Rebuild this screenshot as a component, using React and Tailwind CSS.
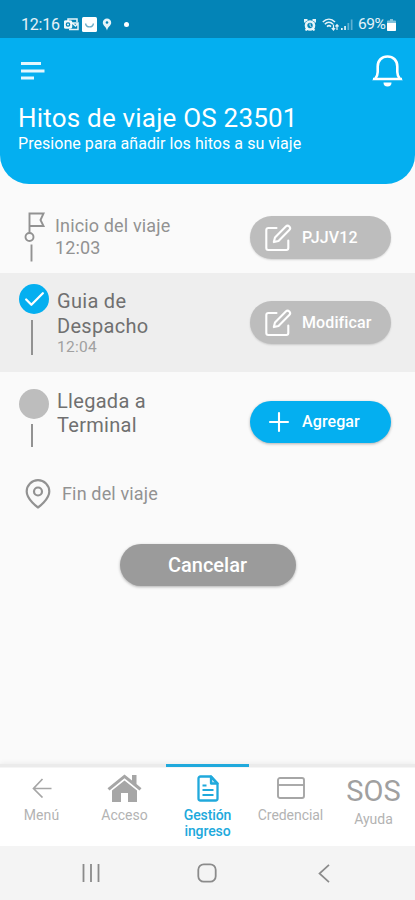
import { Check } from "lucide-react";

function EditIcon() {
  return (
    <svg className="w-[28px] h-[28px] shrink-0" viewBox="0 0 28 28" fill="none" stroke="white" strokeWidth="2.1" strokeLinecap="round" strokeLinejoin="round">
      <path d="M12.500 4H4.300a2 2 0 0 0-2 2v18a2 2 0 0 0 2 2h18a2 2 0 0 0 2-2v-7.500" />
      <path d="M21.800 2.600a2.450 2.450 0 0 1 3.500 3.500L14.500 16.900l-4.700 1.200 1.200-4.700z" />
    </svg>
  );
}

function PlusIcon() {
  return (
    <svg className="w-[28px] h-[28px] shrink-0" viewBox="0 0 28 28" stroke="white" strokeWidth="2.1" strokeLinecap="round">
      <path d="M15 5v18M6 14h18" />
    </svg>
  );
}

function Pill({ label, active, className }) {
  return (
    <button
      className={`flex items-center w-[141px] ml-auto mr-[24px] pl-[14px] rounded-full text-white text-[16px] font-medium ${
        active ? "h-[42px] bg-[#04aff0] shadow-[0_1px_3px_rgba(0,0,0,0.3)]" : "h-[43px] bg-[#bdbdbd] shadow-[0_1px_2px_rgba(0,0,0,0.15)]"
      } ${className}`}
    >
      {active ? <PlusIcon /> : <EditIcon />}
      <span className="ml-[10px] tracking-[0.1px] whitespace-nowrap">{label}</span>
    </button>
  );
}

function StatusBar() {
  return (
    <div className="flex items-center h-[38px] pt-[11px] pl-[21px] pr-[19px] bg-[#0384b7] text-white/90">
      <span className="w-[38px] text-[16px] tracking-[-0.2px]">12:16</span>
      <svg className="w-[15px] h-[13px] ml-[5px]" viewBox="0 0 15 13" fill="none" stroke="currentColor" strokeWidth="1.5">
        <path d="M4 3V1h9v3M8 5h6v6.500H5M8 5l3.500 3L14 5" />
        <rect x="0.500" y="3" width="7" height="7" rx="1" fill="currentColor" />
        <circle cx="4" cy="6.500" r="1.700" stroke="#0384b7" strokeWidth="1.2" />
      </svg>
      <svg className="w-[15px] h-[15px] ml-[3px]" viewBox="0 0 15 15">
        <rect width="15" height="15" rx="1.500" fill="white" />
        <path d="M3.500 6.500c1 4.500 7 4.500 8 0" fill="none" stroke="#6aacc8" strokeWidth="1.300" />
      </svg>
      <svg className="w-[10px] h-[13px] ml-[5px]" viewBox="0 0 10 13" fill="currentColor">
        <path d="M5 0.500a4.200 4.200 0 0 1 4.200 4.200C9.200 7.500 5.800 8.500 5 12.500 4.200 8.500 0.800 7.500 0.800 4.700A4.200 4.200 0 0 1 5 0.500z" />
        <circle cx="5" cy="4.500" r="1.300" fill="#0384b7" />
      </svg>
      <span className="w-[5px] h-[5px] ml-[12px] rounded-full bg-white" />
      <svg className="w-[12px] h-[12px] ml-auto" viewBox="0 0 12 12" fill="none" stroke="currentColor">
        <circle cx="6" cy="6.500" r="4" strokeWidth="2.600" />
        <path d="M6 4.500v2.300l1.500 1" strokeWidth="1" />
        <path d="M0.800 3.500V1H3.500M11.200 3.500V1H8.500M1.500 11.500l2-2M10.500 11.500l-2-2" strokeWidth="1.900" />
      </svg>
      <svg className="w-[17px] h-[13px] ml-[6px]" viewBox="0 0 17 13" fill="none" stroke="currentColor" strokeWidth="1.500">
        <path d="M0.800 4c3.700-3.700 8.500-3.700 12.200 0M2.800 6.300c2.500-2.600 5.700-2.600 8.200 0M5 8.600c1.300-1.300 2.700-1.300 4 0" />
        <path d="M11.500 6.500V12M9.800 10l1.700 2 1.600-2M15 12V6.500M13.500 8.500L15 6.700l1.500 1.800" strokeWidth="1.200" />
      </svg>
      <svg className="w-[12px] h-[11px] ml-[2px]" viewBox="0 0 12 11" fill="currentColor">
        <path d="M0 9h1.700v2H0zM3.200 7h1.700v4H3.200z" />
        <path d="M6.500 4h1.700v7H6.500zM9.800 0.500h1.700V11H9.800z" opacity="0.400" />
      </svg>
      <span className="w-[28px] ml-[5px] text-[15.5px] tracking-[-0.500px]">69%</span>
      <svg className="w-[9px] h-[12px] ml-[1px]" viewBox="0 0 9 12" fill="white">
        <path d="M3 0h3v1.500h2a1 1 0 0 1 1 1V11a1 1 0 0 1-1 1H1a1 1 0 0 1-1-1V2.500a1 1 0 0 1 1-1h2z" opacity="0.500" />
        <path d="M0 4h9v7a1 1 0 0 1-1 1H1a1 1 0 0 1-1-1z" />
      </svg>
    </div>
  );
}

function Header() {
  return (
    <div className="h-[146px] rounded-b-[29px] bg-[#04aff0] text-white">
      <div className="flex justify-between pl-[21px] pr-[12px] pt-[16px]">
        <svg className="w-[24px] h-[20px] mt-[7px]" viewBox="0 0 24 20" stroke="#e4f7fd" strokeWidth="3">
          <path d="M0 2.500h20M0 10h23.500M0 17h13" />
        </svg>
        <svg className="w-[31px] h-[34px]" viewBox="0 0 31 34" fill="none" stroke="white" strokeWidth="2.600">
          <path d="M3 25h25c-1.800-2-2.700-4-2.700-7v-5.500c0-6-4-10-9.800-10s-9.800 4-9.800 10V18c0 3-0.900 5-2.700 7zM1 25h29" />
          <path d="M11.500 28.500h8a4 4 0 0 1-8 0z" fill="white" stroke="none" />
        </svg>
      </div>
      <h1 className="mt-[14px] pl-[18px] text-[26px] leading-[32px] tracking-[0.200px] whitespace-nowrap">Hitos de viaje OS 23501</h1>
      <p className="pl-[18px] mt-[1px] text-[16px] leading-[18px] tracking-[0.050px] whitespace-nowrap">Presione para añadir los hitos a su viaje</p>
    </div>
  );
}

function Milestones() {
  return (
    <div className="text-[#707070]">
      <div className="flex h-[89px] text-[#929292]">
        <svg className="w-[22px] h-[50px] ml-[24px] mt-[28px]" viewBox="0 0 22 50" fill="none" stroke="#929292" strokeWidth="1.900">
          <path d="M5.500 21V1.500h14L16.500 8l3 6h-14" />
          <circle cx="5.500" cy="25" r="4" />
          <path d="M7.500 32.500v17" />
        </svg>
        <div className="ml-[9px] mt-[31px] text-[18px] leading-[22px] tracking-[0.150px] whitespace-nowrap">
          <div>Inicio del viaje</div>
          <div>12:03</div>
        </div>
        <Pill label="PJJV12" className="mt-[32px]" />
      </div>

      <div className="flex h-[99px] bg-[#eeeeee]">
        <div className="w-[30px] ml-[19px] pt-[11px]">
          <div className="flex items-center justify-center w-[30px] h-[30px] rounded-full bg-[#04aff0]">
            <Check className="w-[25px] h-[25px] text-white" strokeWidth={2.200} />
          </div>
          <div className="w-[2px] h-[35px] mt-[6px] ml-[12px] bg-[#929292]" />
        </div>
        <div className="ml-[8px] mt-[16px] text-[20px] leading-[25px] tracking-[0.300px]">
          <div>Guia de</div>
          <div>Despacho</div>
          <div className="text-[15.500px] leading-[17px] text-[#a0a0a0]">12:04</div>
        </div>
        <Pill label="Modificar" className="mt-[28px]" />
      </div>

      <div className="flex h-[99px]">
        <div className="w-[30px] ml-[19px] pt-[17px]">
          <div className="w-[30px] h-[30px] rounded-full bg-[#bdbdbd]" />
          <div className="w-[2px] h-[23px] mt-[5px] ml-[12px] bg-[#929292]" />
        </div>
        <div className="ml-[8px] mt-[17px] text-[20px] leading-[24px] tracking-[0.300px]">
          <div>Llegada a</div>
          <div>Terminal</div>
        </div>
        <Pill label="Agregar" active className="mt-[29px]" />
      </div>

      <div className="flex items-center h-[46px] text-[#929292]">
        <svg className="w-[26px] h-[30px] ml-[25px]" viewBox="0 0 26 30" fill="none" stroke="#929292" strokeWidth="2.2">
          <path d="M13 28.500S1.700 20.500 1.700 12.500a11.300 11.300 0 0 1 22.600 0C24.300 20.500 13 28.500 13 28.500z" strokeLinejoin="round" />
          <circle cx="13" cy="12.500" r="4" />
        </svg>
        <span className="ml-[11px] -mt-[2px] text-[18px] tracking-[0.150px]">Fin del viaje</span>
      </div>
    </div>
  );
}

function BottomNav() {
  return (
    <nav className="grid grid-cols-5 h-[82px] text-center text-[14px] leading-[16px] text-[#b3b3b3] bg-[linear-gradient(#ebebeb_0px,#ebebeb_3px,white_4px)] shadow-[0_-1px_5px_rgba(0,0,0,0.06)]">
      <div className="flex flex-col items-center pt-[14px]">
        <svg className="w-[20px] h-[20px]" viewBox="0 0 20 20" fill="none" stroke="#a6a6a6" strokeWidth="1.700">
          <path d="M10.500 1L1.500 10.500l9 9M1.500 10.500h18" />
        </svg>
        <span className="mt-[9px] tracking-[0.100px]">Menú</span>
      </div>
      <div className="flex flex-col items-center pt-[10px]">
        <svg className="w-[35px] h-[29px]" viewBox="0 0 35 29" fill="#a6a6a6">
          <path d="M17.500 0.500L25 6.500V1h4.500v9l5 4.300-2 2.200-15-12.300-15 12.300-2-2.200z" />
          <path d="M17.500 6.500L30 16.500V28h-9v-9h-7v9H5V16.500z" />
        </svg>
        <span className="mt-[4px]">Acceso</span>
      </div>
      <div className="flex flex-col items-center pt-[8px] border-t-[3px] border-[#20a9dc] text-[#20a9dc] font-medium">
        <svg className="w-[22px] h-[27px]" viewBox="0 0 22 27" fill="none" stroke="#20a9dc" strokeWidth="2.3" strokeLinejoin="round">
          <path d="M14 1.500H3.500a2 2 0 0 0-2 2v20a2 2 0 0 0 2 2h15a2 2 0 0 0 2-2V8.500z" />
          <path d="M14 1.500v7h6.500z" fill="#20a9dc" fillOpacity="0.3" />
          <path d="M5.500 10.500h4M5.500 15h11M5.500 20h11" strokeWidth="2" />
        </svg>
        <span className="mt-[5px] tracking-[-0.100px]">Gestión<br />ingreso</span>
      </div>
      <div className="flex flex-col items-center pt-[13px]">
        <svg className="w-[28px] h-[22px]" viewBox="0 0 28 22" fill="none" stroke="#a6a6a6" strokeWidth="1.900">
          <rect x="1" y="1" width="26" height="20" rx="2" />
          <path d="M1 8h26" />
        </svg>
        <span className="mt-[8px] tracking-[-0.050px]">Credencial</span>
      </div>
      <div className="flex flex-col items-center pt-[13px]">
        <span className="text-[29px] leading-[29px] text-[#a0a0a0]">SOS</span>
        <span className="mt-[5px]">Ayuda</span>
      </div>
    </nav>
  );
}

function SystemBar() {
  return (
    <div className="relative flex items-center h-[54px] pl-[82px] bg-[#f4f4f4] text-[#8b8b8b]">
      <svg className="w-[18px] h-[18px]" viewBox="0 0 18 18" stroke="currentColor" strokeWidth="1.800">
        <path d="M1.500 0v18M9 0v18M16.500 0v18" />
      </svg>
      <svg className="w-[20px] h-[20px] ml-[97px]" viewBox="0 0 20 20" fill="none" stroke="currentColor" strokeWidth="1.800">
        <rect x="1.300" y="1.300" width="17.400" height="17.400" rx="5.500" />
      </svg>
      <svg className="w-[12px] h-[19px] ml-[101px]" viewBox="0 0 12 19" fill="none" stroke="currentColor" strokeWidth="1.700">
        <path d="M11 0.800L1.500 9.500l9.500 8.700" />
      </svg>
    </div>
  );
}

export default function App() {
  return (
    <div className="flex flex-col w-[415px] h-[900px] overflow-hidden bg-[#fafafa] font-[Roboto,sans-serif]">
      <StatusBar />
      <Header />
      <Milestones />
      <button className="self-center w-[176px] h-[42px] mt-[27px] rounded-full bg-[#9b9b9b] text-white text-[20px] font-medium shadow-[0_1px_3px_rgba(0,0,0,0.3)]">
        Cancelar
      </button>
      <div className="mt-auto">
        <BottomNav />
        <SystemBar />
      </div>
    </div>
  );
}
